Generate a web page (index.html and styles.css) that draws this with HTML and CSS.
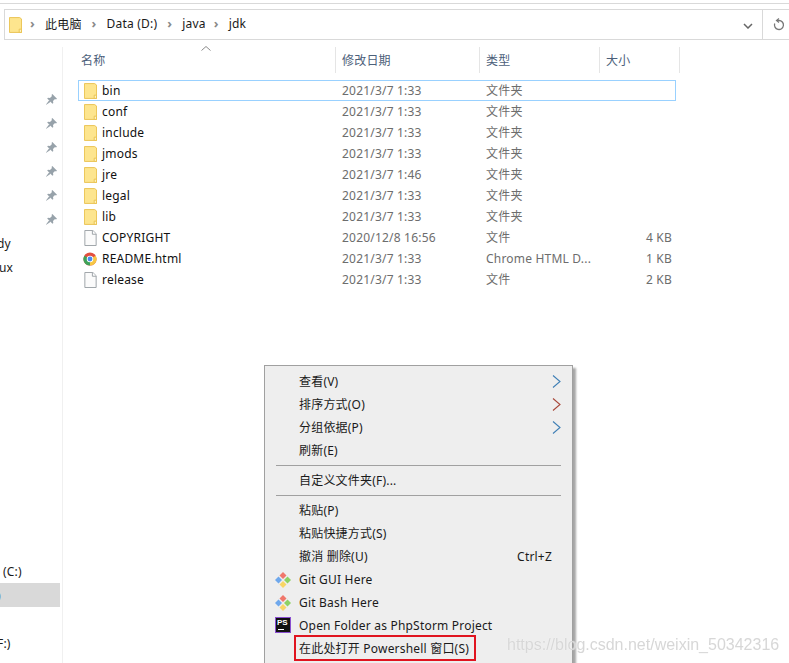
FILE: index.html
```html
<!DOCTYPE html>
<html lang="zh-CN">
<head>
<meta charset="utf-8">
<title>jdk</title>
<link rel="stylesheet" href="styles.css">
</head>
<body>
<svg class="defs" width="0" height="0" aria-hidden="true">
  <defs>
    <symbol id="folder" viewBox="0 0 14 17">
      <path d="M.5.5H11.5L13.5 2V16.5H.5Z" fill="#fde58e" stroke="#e9c14f"/>
      <path d="M11 16.5V13H13.5V16.5Z" fill="#fff3bf" stroke="#e9c14f"/>
    </symbol>
    <symbol id="doc" viewBox="0 0 13 17">
      <path d="M.5.5H9L12.5 4V16.5H.5Z" fill="#fbfbfb" stroke="#9aa0a4"/>
      <path d="M8.5.5V4.5H12.5" fill="#fff" stroke="#9aa0a4"/>
    </symbol>
    <symbol id="pin" viewBox="0 0 11 11">
      <path d="M6.300 0 11 4.700 10 5.500 9 5 7 7 7.300 9 6.500 9.800 1.200 4.500 2 3.700 4 4 6 2 5.500 1Z" fill="#97a2aa"/>
      <path d="M3.200 6.300 4.700 7.800 .3 10.800 0 10.500Z" fill="#97a2aa"/>
    </symbol>
    <symbol id="git" viewBox="0 0 16 16">
      <path d="M8 0 11.500 3.500 8 7 4.500 3.500Z" fill="#f0776b"/>
      <path d="M3.500 4.500 7 8 3.500 11.500 0 8Z" fill="#6fa8ec"/>
      <path d="M12.500 4.500 16 8 12.500 11.500 9 8Z" fill="#8ed163"/>
      <path d="M8 9 11.500 12.500 8 16 4.500 12.500Z" fill="#f8d565"/>
    </symbol>
  </defs>
</svg>

<div class="window">
  <div class="topline"></div>
  <div class="addressbar">
    <div class="crumbs">
      <svg class="crumb-folder"><use href="#folder"/></svg>
      <span class="chev">›</span><span class="crumb crumb-first">此电脑</span>
      <span class="chev">›</span><span class="crumb">Data (D:)</span>
      <span class="chev">›</span><span class="crumb crumb-java">java</span>
      <span class="chev">›</span><span class="crumb">jdk</span>
    </div>
    <div class="dropdown">
      <svg width="10" height="6" viewBox="0 0 10 6"><path d="M1 1 5 5 9 1" fill="none" stroke="#666" stroke-width="1.500"/></svg>
    </div>
    <div class="refresh">
      <svg width="12" height="13" viewBox="0 0 12 13"><path d="M4 2.500H6A4.500 4.500 0 1 1 1.700 5.500" fill="none" stroke="#777" stroke-width="1.300"/><path d="M6 .5 3.500 2.500 6 4.500" fill="none" stroke="#777" stroke-width="1.200"/></svg>
    </div>
  </div>

  <div class="content">
    <nav class="sidebar">
      <div class="nav-row"><svg class="pin"><use href="#pin"/></svg></div>
      <div class="nav-row"><svg class="pin"><use href="#pin"/></svg></div>
      <div class="nav-row"><svg class="pin"><use href="#pin"/></svg></div>
      <div class="nav-row"><svg class="pin"><use href="#pin"/></svg></div>
      <div class="nav-row"><svg class="pin"><use href="#pin"/></svg></div>
      <div class="nav-row"><svg class="pin"><use href="#pin"/></svg></div>
      <div class="nav-row nav-dy">dy</div>
      <div class="nav-row nav-ux">ux</div>
      <div class="nav-spacer"></div>
      <div class="nav-row nav-c">(C:)</div>
      <div class="nav-row nav-selected"><span class="nav-clip">)</span></div>
      <div class="nav-row"></div>
      <div class="nav-row nav-f">F:)</div>
    </nav>

    <main class="files">
      <div class="sort-caret"><svg width="10" height="5" viewBox="0 0 10 5"><path d="M.5 4.500 5 .5 9.500 4.500" fill="none" stroke="#8a8a8a"/></svg></div>
      <div class="header">
        <div class="hcell h-name">名称</div>
        <div class="hcell">修改日期</div>
        <div class="hcell">类型</div>
        <div class="hcell">大小</div>
      </div>
      <div class="rows">
        <div class="row selected"><svg class="ico"><use href="#folder"/></svg><span class="name">bin</span><span class="date">2021/3/7 1:33</span><span class="type type-cjk">文件夹</span><span class="size"></span></div>
        <div class="row"><svg class="ico"><use href="#folder"/></svg><span class="name">conf</span><span class="date">2021/3/7 1:33</span><span class="type type-cjk">文件夹</span><span class="size"></span></div>
        <div class="row"><svg class="ico"><use href="#folder"/></svg><span class="name">include</span><span class="date">2021/3/7 1:33</span><span class="type type-cjk">文件夹</span><span class="size"></span></div>
        <div class="row"><svg class="ico"><use href="#folder"/></svg><span class="name">jmods</span><span class="date">2021/3/7 1:33</span><span class="type type-cjk">文件夹</span><span class="size"></span></div>
        <div class="row"><svg class="ico"><use href="#folder"/></svg><span class="name">jre</span><span class="date">2021/3/7 1:46</span><span class="type type-cjk">文件夹</span><span class="size"></span></div>
        <div class="row"><svg class="ico"><use href="#folder"/></svg><span class="name">legal</span><span class="date">2021/3/7 1:33</span><span class="type type-cjk">文件夹</span><span class="size"></span></div>
        <div class="row"><svg class="ico"><use href="#folder"/></svg><span class="name">lib</span><span class="date">2021/3/7 1:33</span><span class="type type-cjk">文件夹</span><span class="size"></span></div>
        <div class="row"><svg class="ico"><use href="#doc"/></svg><span class="name">COPYRIGHT</span><span class="date">2020/12/8 16:56</span><span class="type type-cjk">文件</span><span class="size">4 KB</span></div>
        <div class="row">
          <svg class="ico chrome" viewBox="0 0 16 16">
            <circle cx="8" cy="8" r="7.500" fill="#e34f3f"/>
            <path d="M8 8 14.500 4.200A7.500 7.500 0 0 1 8 15.500Z" fill="#f6c744"/>
            <path d="M8 8 8 15.500A7.500 7.500 0 0 1 1.500 4.200Z" fill="#3ea35a"/>
            <circle cx="8" cy="8" r="3.700" fill="#fff"/>
            <circle cx="8" cy="8" r="2.800" fill="#4a8bf0"/>
          </svg>
          <span class="name">README.html</span><span class="date">2021/3/7 1:33</span><span class="type">Chrome HTML D...</span><span class="size">1 KB</span>
        </div>
        <div class="row"><svg class="ico"><use href="#doc"/></svg><span class="name">release</span><span class="date">2021/3/7 1:33</span><span class="type type-cjk">文件</span><span class="size">2 KB</span></div>
      </div>
    </main>
  </div>
</div>

<div class="menu">
  <div class="item"><span class="label">查看(V)</span><svg class="arrow arrow-blue" viewBox="0 0 9 13"><path d="M1 .5 8 6.500 1 12.500"/></svg></div>
  <div class="item"><span class="label">排序方式(O)</span><svg class="arrow arrow-red" viewBox="0 0 9 13"><path d="M1 .5 8 6.500 1 12.500"/></svg></div>
  <div class="item"><span class="label">分组依据(P)</span><svg class="arrow arrow-blue" viewBox="0 0 9 13"><path d="M1 .5 8 6.500 1 12.500"/></svg></div>
  <div class="item"><span class="label">刷新(E)</span></div>
  <div class="sep"></div>
  <div class="item"><span class="label">自定义文件夹(F)...</span></div>
  <div class="sep"></div>
  <div class="item"><span class="label">粘贴(P)</span></div>
  <div class="item"><span class="label">粘贴快捷方式(S)</span></div>
  <div class="item"><span class="label">撤消 删除(U)</span><span class="label-latin shortcut">Ctrl+Z</span></div>
  <div class="item"><svg class="mi"><use href="#git"/></svg><span class="label-latin">Git GUI Here</span></div>
  <div class="item"><svg class="mi"><use href="#git"/></svg><span class="label-latin">Git Bash Here</span></div>
  <div class="item"><span class="ps"><span class="ps-text">PS</span><span class="ps-bar"></span></span><span class="label-latin">Open Folder as PhpStorm Project</span></div>
  <div class="item item-marked"><span class="label">在此处打开 Powershell 窗口(S)</span></div>
</div>

<div class="watermark">https://blog.csdn.net/weixin_50342316</div>
</body>
</html>
```
FILE: styles.css
```css
*, *::before, *::after { box-sizing: border-box; }
html, body { margin: 0; height: 663px; overflow: hidden; background: #fff; }
body {
  position: relative;
  font-family: "Noto Sans", "Noto Sans CJK SC", sans-serif;
  font-size: 12px;
  letter-spacing: .2px;
  color: #1a1a1a;
}
.defs { position: absolute; }

.window { display: flex; flex-direction: column; height: 663px; }
.topline { height: 4px; margin-top: 3px; border-top: 1px solid #d9d9d9; flex: none; margin-bottom: 2px; }

.addressbar {
  flex: none;
  display: flex;
  height: 31px;
  margin-left: 4px;
  border: 1px solid #d9d9d9;
  border-right: 0;
}
.crumbs { flex: 1; display: flex; align-items: center; padding-left: 4px; }
.crumb-folder { width: 13px; height: 16px; margin-right: 8px; }
.chev { color: #8a8a8a; width: 6px; font-size: 13px; font-weight: 700; line-height: 1; margin-top: -2px; }
.crumb { margin: -2px 10px 0 9px; }
.crumb-java { margin-right: 8px; }
.dropdown { width: 32px; display: flex; align-items: center; justify-content: center; padding-left: 2px; padding-top: 2px; border-right: 1px solid #d9d9d9; }
.refresh { width: 26px; display: flex; align-items: center; justify-content: center; padding-left: 5px; }

.content { flex: 1; display: flex; min-height: 0; margin-top: 7px; }

.sidebar {
  flex: none;
  width: 63px;
  padding: 40px 2px 0 0;
  border-right: 1px solid #f0f0f0;
  display: flex;
  flex-direction: column;
}
.nav-row { height: 24px; flex: none; display: flex; align-items: center; white-space: nowrap; color: #1a1a1a; }
.nav-spacer { height: 280px; flex: none; }
.pin { width: 11px; height: 11px; margin-left: 46px; }
.nav-dy { text-indent: -3px; }
.nav-ux { text-indent: -1px; }
.nav-c { padding-left: 3px; }
.nav-selected { background: #d9d9d9; }
.nav-clip { margin-left: -3px; color: #1c2b6b; }
.nav-f { text-indent: -3px; }

.files { flex: 1; position: relative; padding-left: 15px; }
.sort-caret { position: absolute; left: 138px; top: -1px; line-height: 0; }
.header {
  display: grid;
  grid-template-columns: 258px 144px 120px 80px;
  width: 602px;
  height: 26px;
}
.hcell { color: #4c607a; display: flex; align-items: center; padding: 0 0 1px 6px; border-right: 1px solid #e5e5e5; }
.h-name { padding-left: 3px; }
.rows { margin-top: 7px; }
.row {
  display: grid;
  grid-template-columns: 18px 240px 144px 120px 66px;
  align-items: center;
  width: 598px;
  height: 21px;
  padding-left: 5px;
  border: 1px solid transparent;
}
.row.selected { border-color: #99d1ff; }
.ico { width: 13px; height: 16px; }
.chrome { width: 14px; height: 14px; margin-left: -1px; }
.name { color: #111; }
.date, .type { color: #6d6d6d; }
.type-cjk { margin-top: -2px; }
.size { color: #6d6d6d; text-align: right; }

.menu {
  position: absolute;
  left: 264px;
  top: 365px;
  width: 309px;
  padding: 4px 2px;
  background: #eeeeee;
  border: 1px solid #a0a0a0;
  box-shadow: 3px 3px 2px rgba(0, 0, 0, .35);
}
.item {
  position: relative;
  height: 23px;
  display: flex;
  align-items: center;
  justify-content: space-between;
  padding: 0 11px 0 32px;
  color: #1a1a1a;
  white-space: nowrap;
}
.label { margin-top: -2px; }
.shortcut { margin-right: 7px; }
.item-marked::after {
  content: "";
  position: absolute;
  left: 27px;
  top: -2px;
  width: 182px;
  height: 26px;
  border: 2px solid #e0141f;
}
.sep { height: 7px; margin: 0 9px; position: relative; }
.sep::before { content: ""; position: absolute; left: 0; right: 0; top: 3px; border-top: 1px solid #a0a0a0; }
.arrow { width: 9px; height: 13px; fill: none; stroke-width: 1.100; margin-right: -2px; }
.arrow-blue { stroke: #3f7fb5; }
.arrow-red { stroke: #a8483a; }
.mi { position: absolute; left: 8px; top: 4px; width: 16px; height: 16px; }
.ps {
  position: absolute;
  left: 8px;
  top: 3px;
  width: 16px;
  height: 16px;
  background: #111;
  border: 1px solid #8a4fd0;
  color: #fff;
}
.ps-text { position: absolute; left: 1px; top: 0; letter-spacing: 0; font: 700 8px/9px "Liberation Sans", sans-serif; }
.ps-bar { position: absolute; left: 2px; top: 11px; width: 6px; height: 1px; background: #fff; }

.watermark {
  position: absolute;
  left: 507px;
  top: 634px;
  font: 16px/22px "Liberation Sans", sans-serif;
  letter-spacing: 0;
  color: rgba(205, 205, 205, .8);
  text-shadow: 0 0 1px #fff;
  filter: blur(.5px);
  white-space: nowrap;
}
```
